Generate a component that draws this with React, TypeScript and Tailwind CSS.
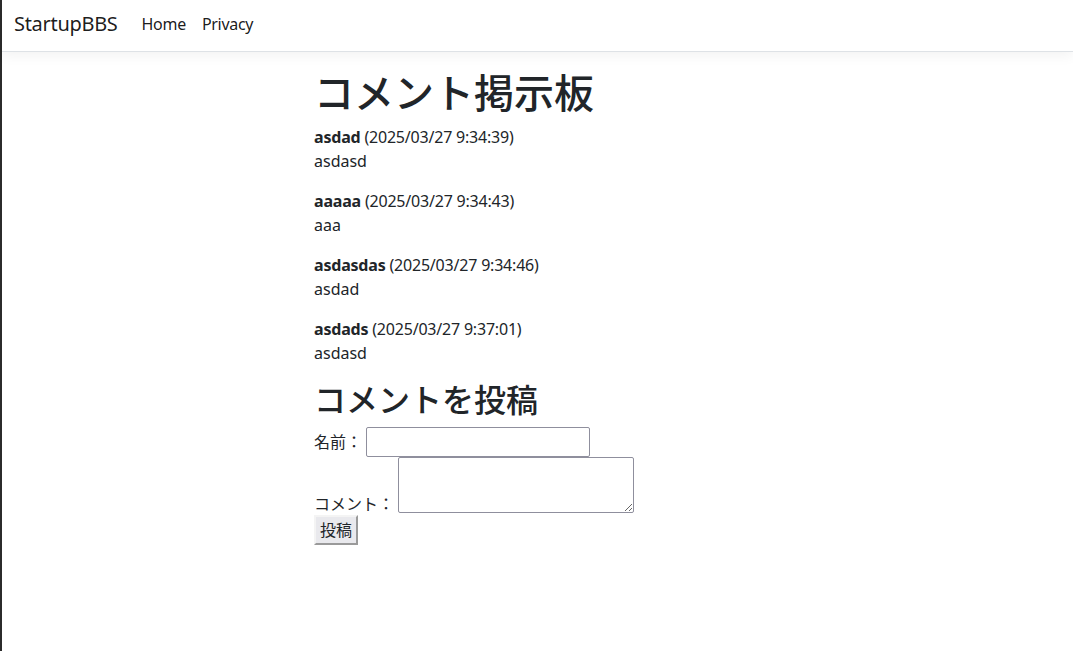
const comments = [
  { name: 'asdad', date: '2025/03/27 9:34:39', body: 'asdasd' },
  { name: 'aaaaa', date: '2025/03/27 9:34:43', body: 'aaa' },
  { name: 'asdasdas', date: '2025/03/27 9:34:46', body: 'asdad' },
  { name: 'asdads', date: '2025/03/27 9:37:01', body: 'asdasd' },
];

const font = "font-['Noto_Sans','Noto_Sans_CJK_JP',sans-serif]";

export default function App() {
  return (
    <div className={`flex min-h-[651px] w-full bg-white text-[#212529] ${font}`}>
      {/* window edge */}
      <div className="w-[2px] shrink-0 bg-[#2b2b2b]" />

      <div className="flex-1 flex flex-col">
        <nav className="h-[52px] flex items-center px-3 pb-[4px] border-b border-[#dee2e6] shadow-[0_4px_12px_rgba(0,0,0,0.05)]">
          <span className="text-[20px] mr-4 leading-[30px] tracking-[-0.3px] text-black/90">StartupBBS</span>
          <a className="px-2 text-[16px] tracking-[-0.3px] text-black/90">Home</a>
          <a className="px-2 text-[16px] tracking-[-0.3px] text-black/90">Privacy</a>
        </nav>

        <main className="pl-[312px] pt-[17px] text-[16px] leading-6">
          <h1 className="text-[40px] leading-[48px] font-medium mb-2">コメント掲示板</h1>

          {comments.map((c) => (
            <div key={c.name} className="mb-4">
              <div className="tracking-[-0.2px]">
                <strong className="font-bold">{c.name}</strong> ({c.date})
              </div>
              <div>{c.body}</div>
            </div>
          ))}

          <h2 className="text-[32px] leading-[38px] font-medium mb-2">コメントを投稿</h2>

          <form className="flex flex-col items-start">
            <div className="flex items-center">
              <label className="mr-1">名前：</label>
              <input
                type="text"
                className="w-[224px] h-[30px] border border-[#8f8f9d] rounded-[2px] px-[2px] outline-none"
              />
            </div>
            <div className="flex items-end pb-[3px]">
              <label className="mr-1 -mb-[3px]">コメント：</label>
              <textarea className="w-[236px] h-[56px] border border-[#8f8f9d] rounded-[2px] px-[2px] outline-none" />
            </div>
            <button
              type="button"
              className="-mt-px h-[30px] px-[4px] text-[16px] leading-6 bg-[#e9e9ed] border-2 border-t-[#f4f4f4] border-l-[#f4f4f4] border-r-[#9a9a9a] border-b-[#9a9a9a]"
            >
              投稿
            </button>
          </form>
        </main>
      </div>
    </div>
  );
}
